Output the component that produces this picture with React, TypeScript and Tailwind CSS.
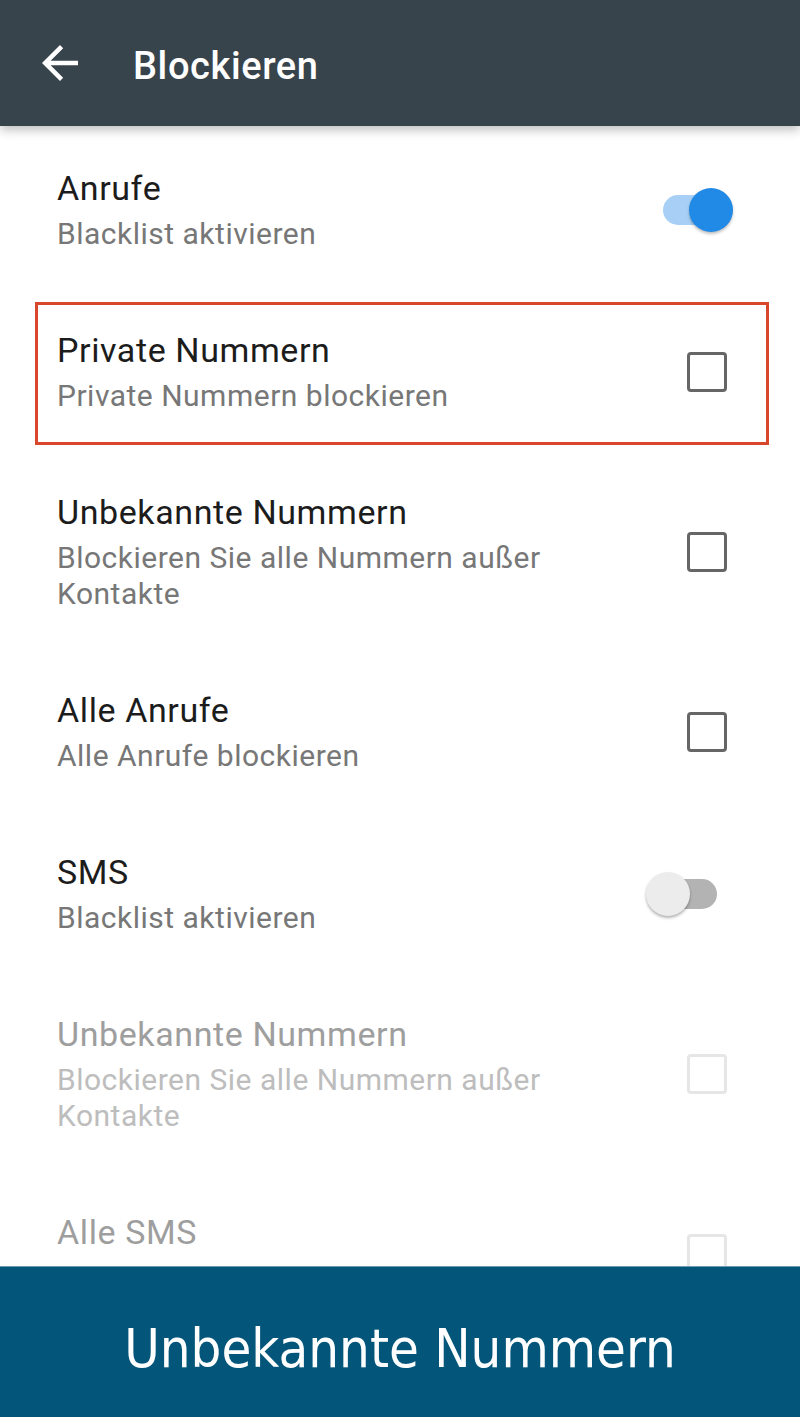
import React from 'react';

interface Item {
  title: string;
  subtitle: string;
  control: 'switch-on' | 'switch-off' | 'checkbox';
  disabled?: boolean;
  highlighted?: boolean;
}

const ITEMS: Item[] = [
  { title: 'Anrufe', subtitle: 'Blacklist aktivieren', control: 'switch-on' },
  { title: 'Private Nummern', subtitle: 'Private Nummern blockieren', control: 'checkbox', highlighted: true },
  { title: 'Unbekannte Nummern', subtitle: 'Blockieren Sie alle Nummern außer Kontakte', control: 'checkbox' },
  { title: 'Alle Anrufe', subtitle: 'Alle Anrufe blockieren', control: 'checkbox' },
  { title: 'SMS', subtitle: 'Blacklist aktivieren', control: 'switch-off' },
  { title: 'Unbekannte Nummern', subtitle: 'Blockieren Sie alle Nummern außer Kontakte', control: 'checkbox', disabled: true },
  { title: 'Alle SMS', subtitle: 'Alle SMS blockieren', control: 'checkbox', disabled: true }
];

function Switch({ on }: { on: boolean }) {
  return (
    <div className={`relative shrink-0 w-[72px] h-[44px] ${on ? '-ml-[5px]' : '-ml-[21px]'}`}>
      <div
        className={`absolute top-[7px] h-[30px] w-[64px] rounded-full ${
          on ? 'left-[1px] bg-[#a8d0f6]' : 'left-[7px] bg-[#b3b3b3]'
        }`}
      />
      <div
        className={`absolute top-0 w-[44px] h-[44px] rounded-full ${
          on
            ? 'right-[1px] bg-[#2189e6] shadow-[0_2px_3px_rgba(0,0,0,0.25)]'
            : 'left-0 bg-[#ececec] shadow-[0_2px_3px_rgba(0,0,0,0.3)]'
        }`}
      />
    </div>
  );
}

function Checkbox({ disabled }: { disabled?: boolean }) {
  return (
    <div
      className={`w-[40px] h-[40px] rounded-[4px] border-[3px] ${
        disabled ? 'border-[#e6e6e6]' : 'border-[#666666]'
      }`}
    />
  );
}

function Row({ item }: { item: Item }) {
  const isCheckbox = item.control === 'checkbox';
  return (
    <div className="relative flex items-center pl-[57px] pr-[53px] py-[39px]">
      {item.highlighted && (
        <div className="absolute left-[35px] right-[31px] top-[11px] bottom-[8px] border-[3px] border-[#d8472c]" />
      )}
      <div className="flex-1 pr-[40px]">
        <div
          className={`text-[34px] leading-[40px] tracking-[0.6px] ${
            item.disabled ? 'text-[#9e9e9e]' : 'text-[#1c1c1c]'
          }`}
        >
          {item.title}
        </div>
        <div
          className={`mt-[8px] text-[30px] leading-[36px] tracking-[0.5px] ${
            item.disabled ? 'text-[#bdbdbd]' : 'text-[#777777]'
          }`}
        >
          {item.subtitle}
        </div>
      </div>
      <div className={`w-[80px] flex ${isCheckbox ? 'justify-center' : 'justify-start'}`}>
        {isCheckbox ? (
          <Checkbox disabled={item.disabled} />
        ) : (
          <Switch on={item.control === 'switch-on'} />
        )}
      </div>
    </div>
  );
}

export default function App() {
  return (
    <div
      className="relative w-[800px] h-[1417px] overflow-hidden bg-white"
      style={{ fontFamily: 'Roboto, "Noto Sans", sans-serif' }}
    >
      {/* Toolbar */}
      <header className="relative z-10 h-[126px] bg-[#37444c] flex items-center shadow-[0_4px_10px_rgba(0,0,0,0.25)]">
        <svg className="ml-[33px] w-[54px] h-[54px]" viewBox="0 0 24 24" fill="#ffffff">
          <path d="M20 11H7.83l5.59-5.59L12 4l-8 8 8 8 1.41-1.41L7.83 13H20v-2z" />
        </svg>
        <h1 className="ml-[46px] pt-[5px] text-[38px] font-medium text-white leading-none tracking-[0.6px]">
          Blockieren
        </h1>
      </header>

      {/* Settings list */}
      <div className="pt-[3px]">
        {ITEMS.map((item, i) => (
          <Row key={i} item={item} />
        ))}
      </div>

      {/* Caption banner */}
      <div className="absolute left-0 right-0 bottom-0 h-[151px] bg-[#03557a] border-t border-[#6b9bb3] flex items-center justify-center">
        <span
          className="text-white text-[54px] font-light pt-[12px]"
          style={{ fontFamily: '"Liberation Sans Narrow", "DejaVu Sans Condensed", sans-serif' }}
        >
          Unbekannte Nummern
        </span>
      </div>
    </div>
  );
}
